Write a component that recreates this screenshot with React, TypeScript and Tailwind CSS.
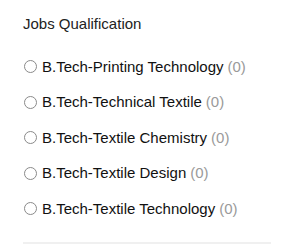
const quals = [
  'B.Tech-Printing Technology',
  'B.Tech-Technical Textile',
  'B.Tech-Textile Chemistry',
  'B.Tech-Textile Design',
  'B.Tech-Textile Technology',
]

export default function App() {
  return (
    <div className="w-[300px] h-[252px] bg-white overflow-hidden" style={{ fontFamily: '"Liberation Sans", Arial, sans-serif' }}>
      <div className="pl-[23px] pr-[29px] pt-[14px]">
        <h3 className="text-[15px] leading-[20px] text-[#222]">Jobs Qualification</h3>
        <ul className="mt-[15px]">
          {quals.map((q) => (
            <li key={q} className="h-[35.5px] flex items-center">
              <span className="ml-px w-[13px] h-[13px] rounded-full border-[1.5px] border-[#8a8a8a] shrink-0" />
              <span className="ml-[5px] text-[15px] text-[#111]">{q}</span>
              <span className="ml-[4px] text-[15px] text-[#9a9a9a]">(0)</span>
            </li>
          ))}
        </ul>
        <div className="mt-[15px] h-[2px] bg-[#f0f0f0]" />
      </div>
    </div>
  )
}
